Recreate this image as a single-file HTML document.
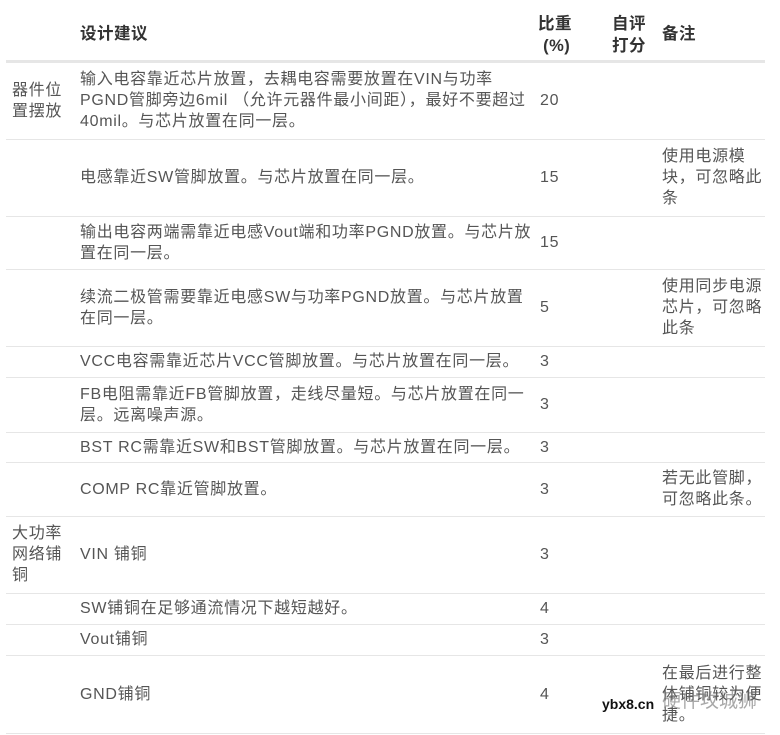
<!DOCTYPE html>
<html><head><meta charset="utf-8"><style>
body{margin:0;background:#fff;width:780px;height:735px;overflow:hidden;position:relative;font-family:"Liberation Sans","Noto Sans CJK SC",sans-serif;font-size:16px;letter-spacing:0.7px;color:#555;}
table{position:absolute;left:6px;top:0;width:759px;border-collapse:collapse;table-layout:fixed;}
td,th{padding:0 6px;vertical-align:middle;line-height:21px;text-align:left;border-bottom:1px solid #e6e6e6;white-space:nowrap;}
th{font-weight:bold;color:#333;border-bottom:3px solid #e6e6e6;font-size:16.5px;letter-spacing:0.5px;padding-top:10px;}
td:nth-child(3){padding-left:8px;}
.wm{position:absolute;left:602px;top:696px;font-size:14px;color:#111;font-weight:bold;letter-spacing:0;font-family:"Liberation Sans",sans-serif;}
.wm2{position:absolute;left:662px;top:686px;font-size:19px;letter-spacing:0;color:rgba(110,110,110,.6);font-family:"Noto Sans CJK SC",sans-serif;}
</style></head><body>
<table>
<colgroup><col style="width:68px"><col style="width:458px"><col style="width:74px"><col style="width:50px"><col style="width:109px"></colgroup>
<tr style="height:61px"><th></th><th>设计建议</th><th style="line-height:22px">比重<br>&nbsp;(%)</th><th style="line-height:22px">自评<br>打分</th><th>备注</th></tr>
<tr style="height:78px"><td>器件位<br>置摆放</td><td>输入电容靠近芯片放置，去耦电容需要放置在VIN与功率<br>PGND管脚旁边6mil （允许元器件最小间距），最好不要超过<br>40mil。与芯片放置在同一层。</td><td>20</td><td></td><td></td></tr>
<tr style="height:77px"><td></td><td>电感靠近SW管脚放置。与芯片放置在同一层。</td><td>15</td><td></td><td>使用电源模<br>块，可忽略此<br>条</td></tr>
<tr style="height:53px"><td></td><td>输出电容两端需靠近电感Vout端和功率PGND放置。与芯片放<br>置在同一层。</td><td>15</td><td></td><td></td></tr>
<tr style="height:77px"><td></td><td>续流二极管需要靠近电感SW与功率PGND放置。与芯片放置<br>在同一层。</td><td>5</td><td></td><td>使用同步电源<br>芯片，可忽略<br>此条</td></tr>
<tr style="height:31px"><td></td><td>VCC电容需靠近芯片VCC管脚放置。与芯片放置在同一层。</td><td>3</td><td></td><td></td></tr>
<tr style="height:55px"><td></td><td>FB电阻需靠近FB管脚放置，走线尽量短。与芯片放置在同一<br>层。远离噪声源。</td><td>3</td><td></td><td></td></tr>
<tr style="height:30px"><td></td><td>BST RC需靠近SW和BST管脚放置。与芯片放置在同一层。</td><td>3</td><td></td><td></td></tr>
<tr style="height:54px"><td></td><td>COMP RC靠近管脚放置。</td><td>3</td><td></td><td>若无此管脚，<br>可忽略此条。</td></tr>
<tr style="height:77px"><td>大功率<br>网络铺<br>铜</td><td>VIN 铺铜</td><td>3</td><td></td><td></td></tr>
<tr style="height:31px"><td></td><td>SW铺铜在足够通流情况下越短越好。</td><td>4</td><td></td><td></td></tr>
<tr style="height:31px"><td></td><td>Vout铺铜</td><td>3</td><td></td><td></td></tr>
<tr style="height:78px"><td></td><td>GND铺铜</td><td>4</td><td></td><td>在最后进行整<br>体铺铜较为便<br>捷。</td></tr>
</table>
<div class="wm2">硬件攻城狮</div>
<div class="wm">ybx8.cn</div>
</body></html>
